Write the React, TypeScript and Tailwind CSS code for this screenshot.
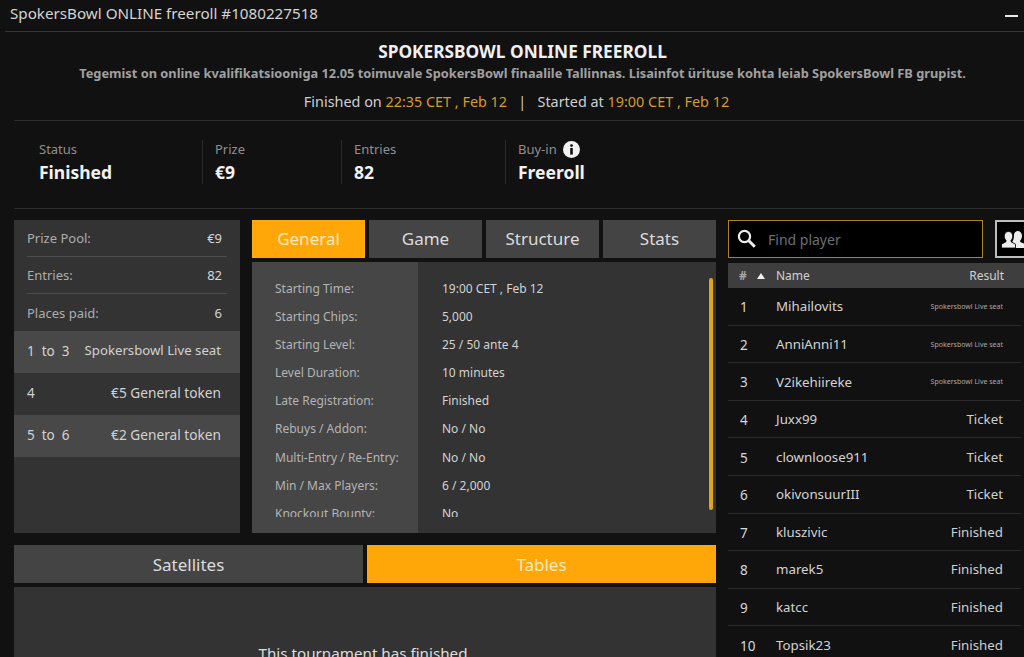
import React from "react";

const details: [string, string][] = [
  ["Starting Time:", "19:00 CET , Feb 12"],
  ["Starting Chips:", "5,000"],
  ["Starting Level:", "25 / 50 ante 4"],
  ["Level Duration:", "10 minutes"],
  ["Late Registration:", "Finished"],
  ["Rebuys / Addon:", "No / No"],
  ["Multi-Entry / Re-Entry:", "No / No"],
  ["Min / Max Players:", "6 / 2,000"],
  ["Knockout Bounty:", "No"],
];

const players: [string, string, string][] = [
  ["1", "Mihailovits", "Spokersbowl Live seat"],
  ["2", "AnniAnni11", "Spokersbowl Live seat"],
  ["3", "V2ikehiireke", "Spokersbowl Live seat"],
  ["4", "Juxx99", "Ticket"],
  ["5", "clownloose911", "Ticket"],
  ["6", "okivonsuurIII", "Ticket"],
  ["7", "kluszivic", "Finished"],
  ["8", "marek5", "Finished"],
  ["9", "katcc", "Finished"],
  ["10", "Topsik23", "Finished"],
];

function Stat({ label, value, width, info, last }: { label: string; value: string; width: string; info?: boolean; last?: boolean }) {
  return (
    <div className={`${width} h-[44px] flex flex-col pl-[12px] ${last ? "" : "border-r border-[#2a2a2a]"}`}>
      <div className="text-[13px] leading-[18px] text-[#8f8f8f] flex items-center gap-[6px] h-[18px]">
        {label}
        {info && (
          <svg width="17" height="17" viewBox="0 0 17 17">
            <circle cx="8.500" cy="8.500" r="8.500" fill="#f2f2f2" />
            <circle cx="8.500" cy="4.600" r="1.400" fill="#111111" />
            <rect x="7.200" y="7" width="2.600" height="6.600" fill="#111111" />
          </svg>
        )}
      </div>
      <div className="text-[17.500px] leading-[24px] mt-[2px] font-bold text-[#f2f2f2]">{value}</div>
    </div>
  );
}

function PrizeRow({ a, b, border }: { a: string; b: string; border?: boolean }) {
  return (
    <div className={`h-[37px] mx-[13px] pt-[2px] flex items-center justify-between text-[13px] ${border ? "border-b border-[#4d4d4d]" : ""}`}>
      <span className="text-[#adadad]">{a}</span>
      <span className="text-[#d6d6d6] pr-[5px]">{b}</span>
    </div>
  );
}

function Place({ a, b, light, tight }: { a: string; b: string; light?: boolean; tight?: boolean }) {
  return (
    <div className={`h-[42px] pl-[13px] pr-[19px] pb-[2px] flex items-center justify-between text-[13.500px] text-[#d2d2d2] ${light ? "bg-[#484848]" : ""}`}>
      <span className="whitespace-pre">{a}</span>
      <span className={tight ? "text-[13.200px]" : "text-[13.700px]"}>{b}</span>
    </div>
  );
}

function Tab({ label, active, low }: { label: string; active?: boolean; low?: boolean }) {
  return (
    <div className={`flex-1 h-[38px] flex items-center justify-center text-[17px] ${low ? "pt-[1px]" : ""} ${active ? "bg-[#ffa708] text-[#ffe9c0]" : "bg-[#444444] text-[#dcdcdc]"}`}>
      {label}
    </div>
  );
}

export default function App() {
  return (
    <div className="w-[1024px] h-[657px] overflow-hidden bg-[#111111] text-white flex flex-col" style={{ fontFamily: '"Noto Sans", "Open Sans", sans-serif' }}>
      <div className="h-[32px] ml-[5px] border-b border-[#333333] flex items-center justify-between shrink-0">
        <div className="pl-[5px] text-[15.200px] text-[#d4d4d4] pb-[5px]">SpokersBowl ONLINE freeroll #1080227518</div>
        <div className="w-[13px] h-[2px] bg-[#e8e8e8] mr-[6px] mt-[1px]" />
      </div>

      <div className="ml-[14px] h-[89px] border-b border-[#2e2e2e] shrink-0 flex flex-col items-center pl-[7px]">
        <div className="mt-[8px] h-[24px] leading-[24px] text-[17.300px] font-bold text-[#f0f0f0]">SPOKERSBOWL ONLINE FREEROLL</div>
        <div className="h-[18px] leading-[18px] text-[12.800px] font-bold text-[#a0a0a0] whitespace-nowrap">Tegemist on online kvalifikatsiooniga 12.05 toimuvale SpokersBowl finaalile Tallinnas. Lisainfot ürituse kohta leiab SpokersBowl FB grupist.</div>
        <div className="mt-[8px] mr-[12px] h-[24px] leading-[24px] text-[14.400px] text-[#cfcfcf] whitespace-pre">
          Finished on <span className="text-[#d79c22]">22:35 CET , Feb 12</span>{"   |   "}Started at <span className="text-[#d79c22]">19:00 CET , Feb 12</span>
        </div>
      </div>

      <div className="ml-[14px] h-[88px] border-b border-[#2e2e2e] shrink-0 flex items-center pl-[13px] pb-[5px]">
        <Stat label="Status" value="Finished" width="w-[176px]" />
        <Stat label="Prize" value="€9" width="w-[139px]" />
        <Stat label="Entries" value="82" width="w-[164px]" />
        <Stat label="Buy-in" value="Freeroll" width="w-[120px]" info last />
      </div>

      <div className="flex mt-[11px] pl-[14px] gap-[12px] min-h-0 flex-1">
        <div className="w-[702px] shrink-0 flex flex-col">
          <div className="flex gap-[12px] h-[313px] shrink-0">
            <div className="w-[226px] bg-[#333333] shrink-0">
              <PrizeRow a="Prize Pool:" b="€9" border />
              <PrizeRow a="Entries:" b="82" border />
              <PrizeRow a="Places paid:" b="6" />
              <Place a="1  to  3" b="Spokersbowl Live seat" light tight />
              <Place a="4" b="€5 General token" />
              <Place a="5  to  6" b="€2 General token" light />
            </div>
            <div className="flex-1 flex flex-col min-w-0">
              <div className="flex gap-[4px] shrink-0">
                <Tab label="General" active />
                <Tab label="Game" />
                <Tab label="Structure" />
                <Tab label="Stats" />
              </div>
              <div className="relative mt-[4px] h-[271px] bg-[#333333]">
                <div className="absolute right-[3px] top-[16px] w-[4px] h-[232px] bg-[#e0a51c] rounded-full" />
                <div className="flex h-full">
                  <div className="w-[166px] bg-[#464646] shrink-0 pl-[23px]">
                    <div className="h-[255px] overflow-hidden pt-[12.500px]">
                      {details.map(([k]) => (
                        <div key={k} className="h-[28.200px] leading-[28px] text-[12px] text-[#b4b4b4] whitespace-nowrap">{k}</div>
                      ))}
                    </div>
                  </div>
                  <div className="pl-[24px]">
                    <div className="h-[255px] overflow-hidden pt-[12.500px]">
                      {details.map(([k, v]) => (
                        <div key={k} className="h-[28.200px] leading-[28px] text-[12px] text-[#d2d2d2] whitespace-nowrap">{v}</div>
                      ))}
                    </div>
                  </div>
                </div>
              </div>
            </div>
          </div>
          <div className="flex gap-[4px] mt-[12px] shrink-0">
            <Tab label="Satellites" low />
            <Tab label="Tables" active low />
          </div>
          <div className="mt-[4px] flex-1 bg-[#333333] flex justify-center pt-[55px] pr-[4px] text-[15.200px] text-[#dedede]">
            This tournament has finished
          </div>
        </div>

        <div className="flex-1 min-w-0 flex flex-col">
          <div className="flex items-stretch h-[38px] shrink-0">
            <div className="w-[255px] shrink-0 h-[38px] bg-black border border-[#b07f27] flex items-center pl-[8px] gap-[11px]">
              <svg width="20" height="20" viewBox="0 0 20 20" fill="none" stroke="#ededed" strokeWidth="2.200">
                <circle cx="7.500" cy="7.500" r="5.600" />
                <path d="M11.800 11.800 17.800 17.800" strokeWidth="3" />
              </svg>
              <span className="text-[14px] text-[#6e6e6e]">Find player</span>
            </div>
            <div className="ml-[12px] w-[40px] shrink-0 h-[38px] bg-black border-2 border-[#bdbdbd] flex items-center pl-[4px]">
              <svg width="26" height="18" viewBox="0 0 26 18" fill="#ededed">
                <path d="M16.500 1c2.800 0 4.500 2.100 4.500 4.900 0 1.900-.8 3.500-1.800 4.500v1.500l5.800 2.600V18H14.500v-3.800l-3-1.700v-1.400c1-1 1.400-2.800 1.400-4.900 0-3 1.300-5.200 3.600-5.200z" />
                <path d="M7.500 1.500c2.600 0 4.200 2 4.200 4.600 0 1.800-.7 3.300-1.700 4.200v1.400l4.500 2.500V18H.500v-3.800L5 11.700v-1.400C4 9.400 3.300 7.900 3.300 6.100 3.300 3.500 4.900 1.500 7.500 1.500z" stroke="#000000" strokeWidth="0.800" />
              </svg>
            </div>
          </div>
          <div className="mt-[5px] h-[25px] shrink-0 bg-[#3e3e3e] flex items-center text-[12px] text-[#d0d0d0] pr-[20px]">
            <span className="ml-[11px] w-[18px] font-bold text-[#a8a8a8]">#</span>
            <svg width="8" height="6" viewBox="0 0 8 6" fill="#eeeeee"><path d="M4 0 8 6H0z" /></svg>
            <span className="ml-[11px] flex-1">Name</span>
            <span>Result</span>
          </div>
          <div className="w-[293px]">
            {players.map(([n, name, res], i) => (
              <div key={n} className={`h-[37.600px] pt-[2px] flex items-center pr-[18px] ${i < players.length - 1 ? "border-b border-[#2b2b2b]" : ""}`}>
                <span className="ml-[12px] w-[36px] text-[13.500px] text-[#d8d8d8]">{n}</span>
                <span className="flex-1 text-[13.300px] text-[#d4d4d4]">{name}</span>
                <span className={res.length > 10 ? "text-[7px] text-[#a8a8a8]" : "text-[13.300px] text-[#cfcfcf]"}>{res}</span>
              </div>
            ))}
          </div>
        </div>
      </div>
    </div>
  );
}
